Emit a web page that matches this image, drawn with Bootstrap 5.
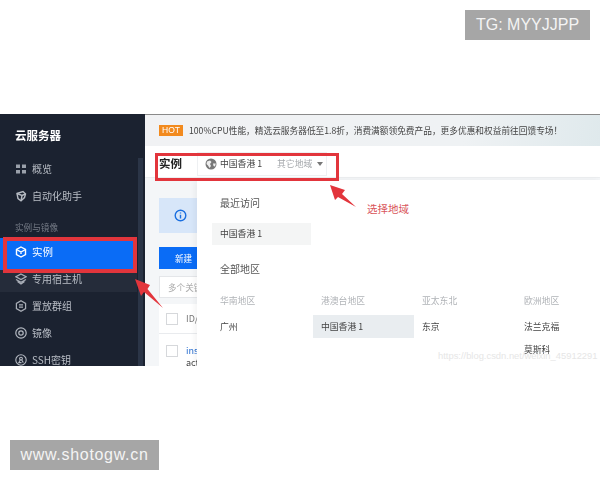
<!DOCTYPE html>
<html lang="zh-CN">
<head>
<meta charset="utf-8">
<title>云服务器 实例</title>
<link rel="stylesheet" href="https://cdn.jsdelivr.net/npm/bootstrap@5.3.0/dist/css/bootstrap.min.css">
<style>
html,body{width:600px;height:480px;overflow:hidden;background:#fff}
body{font-family:"Noto Sans CJK SC","Liberation Sans",sans-serif;position:relative}
.shot{margin-top:114px;height:252px;overflow:hidden;position:relative;filter:blur(.35px)}
.side{width:145px;background:#1b2230;color:#c6cad1;position:relative;flex:none}
.side-title{height:41px;padding-left:15px;font-size:11.5px;font-weight:700;color:#fff;line-height:42px}
.side-row{height:27px;padding-left:15px;font-size:10px;gap:5px;color:#b9bec6;width:136px}
.side-row svg{width:12px;height:12px;flex:none}
.side-label{height:22px;margin-top:7px;padding-left:15px;font-size:8.6px;color:#767c87;line-height:22px}
.side-on{background:#0a6cf6;color:#fff;box-shadow:0 5px 0 #0a6cf6;position:relative;z-index:1;width:135px;font-size:10.5px}
.side-hov{background:#252c3a;width:137px}
.side-bar{position:absolute;right:2px;top:44px;bottom:0;width:5px;background:#2b3547}
.main{background:#f4f6f8;border-top:1px solid #8a8a8a;min-width:0}
.promo{height:31px;padding-left:14px;gap:6px;font-size:8.7px;color:#444;white-space:nowrap;background:linear-gradient(100deg,#f1f2f4 0,#eff2f4 70%,#dfe9ec 100%)}
.hot{background:#f28a1e;color:#fff;font-size:8.5px;font-family:"Liberation Sans",sans-serif;padding:0 3px;line-height:11px}
.head{height:32px;background:#fff;padding:4px 0 0 14px;border-bottom:1px solid #eceef0}
.head-title{font-size:11.5px;font-weight:700;color:#222;width:38px}
.region{width:130px;height:24px;border:1px solid #eef0f2;font-size:8.8px;color:#444;padding-left:7px}
.region svg{width:12px;height:12px;margin-right:3px;flex:none}
.region-more{color:#a5a8ac;margin-left:15px;margin-right:5px}
.caret-down{width:0;height:0;border:3px solid transparent;border-top:4px solid #777;border-bottom:0}
.work{padding:20px 0 0 14px;width:260px}
.notice{height:35px;background:#d7e6f9;padding-left:15px}
.notice svg{width:13px;height:13px}
.make{margin-top:14px;width:70px;height:22px;background:#0a6cf6;color:#fff;font-size:8.6px;padding-left:16px}
.find{margin-top:7px;height:22px;background:#fff;border:1px solid #e4e6e9;font-size:8.6px;color:#aaa;padding-left:8px}
.tbl{margin-top:6px;background:#fff;font-size:9px}
.tbl-row{height:30px;gap:8px;padding-left:7px;border-bottom:1px solid #e9ebee;color:#777}
.tbl-box{width:12px;height:12px;border:1px solid #d6d8db;background:#fff;flex:none}
.tbl-two{height:40px;padding-top:11px;align-items:flex-start}
.tbl-two a{color:#2a6fd0;text-decoration:none;display:block;line-height:12px}
.tbl-two span{color:#444;display:block;line-height:12px}
.drop{position:absolute;left:52px;top:65px;right:0;bottom:0;background:#fff;box-shadow:-2px 0 6px rgba(0,0,0,.05);z-index:2}
.drop-h{font-size:10px;color:#555;padding-left:23px;line-height:14px}
.drop-all{margin-top:17px}
.chip{width:99px;height:22px;margin:13px 0 0 15px;background:#f4f5f5;padding-left:8px;font-size:8.8px;color:#444}
.regions{display:grid;grid-template-columns:101px 101px 102px 80px;margin:13px 0 0 15px;font-size:8.8px;color:#444}
.regions>div{height:23px;padding-left:8px}
.regions .cap{color:#b0b3b7;height:26px;padding-bottom:2px}
.regions .sel{background:#e9edf0}
.over{position:absolute;left:0;top:0;pointer-events:none;z-index:5}
.box-side{position:absolute;left:3px;top:237px;width:134px;height:36px;border:4px solid #e2353c;z-index:4}
.box-head{position:absolute;left:155px;top:153px;width:184px;height:28px;border:3px solid #e2353c;z-index:4}
.tip-red{position:absolute;left:367px;top:201px;font-size:10.5px;color:#d9555a;z-index:4;line-height:16px}
.faint{position:absolute;left:438px;top:350px;font-family:"Liberation Sans",sans-serif;font-size:9.4px;color:#e6e6e6;z-index:4;white-space:nowrap;line-height:12px}
.wm{position:absolute;background:#a6a6a6;color:#f4f4f4;height:30px;font-family:"Liberation Sans",sans-serif;font-size:16px;line-height:30px;text-align:center;z-index:6;white-space:nowrap}
.wm-top{left:465px;top:10px;width:125px}
.wm-bot{left:10px;top:440px;width:149px;letter-spacing:.7px}
</style>
</head>
<body>
<div class="shot d-flex">
  <aside class="side">
    <div class="side-title">云服务器</div>
    <div class="side-row d-flex align-items-center">
      <svg viewBox="0 0 12 12" fill="#9aa0aa"><rect x="1" y="1.5" width="4" height="3.5"/><rect x="7" y="1.5" width="4" height="3.500"/><rect x="1" y="7" width="4" height="3.5"/><rect x="7" y="7" width="4" height="3.5"/></svg>概览</div>
    <div class="side-row d-flex align-items-center">
      <svg viewBox="0 0 12 12" fill="none" stroke="#b5bac2" stroke-width="1.4"><path d="M2 3.5 8 1.5 10.5 4 9.5 7.5 6 10.8 3 8.5Z"/><path d="M2 3.5 7 5.5 10.5 4M7 5.500 6 10.8"/></svg>自动化助手</div>
    <div class="side-label">实例与镜像</div>
    <div class="side-row side-on d-flex align-items-center">
      <svg viewBox="0 0 12 12" fill="none" stroke="#fff" stroke-width="1.4"><path d="M6 1 10.5 3.5V8.5L6 11 1.5 8.5V3.5Z"/><path d="M1.5 3.5 6 6 10.5 3.5M6 6V8"/></svg>实例</div>
    <div class="side-row side-hov d-flex align-items-center">
      <svg viewBox="0 0 12 12" fill="none" stroke="#a9aeb7" stroke-width="1.3"><path d="M6 1 11 3.8 6 6.6 1 3.8Z"/><path d="M1 6.5 6 9.3 11 6.5M2.5 8.5 6 11 9.5 8.5"/></svg>专用宿主机</div>
    <div class="side-row d-flex align-items-center">
      <svg viewBox="0 0 12 12" fill="none" stroke="#a9aeb7" stroke-width="1.2"><path d="M6 .8 10.6 3.4V8.6L6 11.2 1.4 8.6V3.4Z"/><path d="M4 4.8H8M4 7.2H8"/></svg>置放群组</div>
    <div class="side-row d-flex align-items-center">
      <svg viewBox="0 0 12 12" fill="none" stroke="#b5bac2" stroke-width="1.2"><circle cx="6" cy="6" r="5.2"/><circle cx="6" cy="6" r="2.2"/></svg>镜像</div>
    <div class="side-row d-flex align-items-center">
      <svg viewBox="0 0 12 12" fill="none" stroke="#b5bac2" stroke-width="1.1"><circle cx="6" cy="6" r="5.2"/><circle cx="6" cy="4.6" r="1.4"/><path d="M5.4 5.8 3.8 8.6H6.5M6.6 5.8 8.3 8.6"/></svg>SSH密钥</div>
    <div class="side-bar"></div>
  </aside>
  <main class="main flex-grow-1 position-relative">
    <div class="promo d-flex align-items-center"><span class="hot">HOT</span><span>100%CPU性能，精选云服务器低至1.8折，消费满额领免费产品，更多优惠和权益前往回馈专场！</span></div>
    <div class="head d-flex align-items-center">
      <div class="head-title">实例</div>
      <div class="region d-flex align-items-center">
        <svg viewBox="0 0 12 12"><circle cx="6" cy="6" r="5.5" fill="#777"/><path d="M2 3.5 5 2.5 6.5 4 5 6 6 8 4.5 10 3 7.5 1.5 6ZM8 5.5 10.8 5.5 10 8.5 8.5 8Z" fill="#eee"/></svg>
        <span>中国香港 1</span><span class="region-more">其它地域</span><span class="caret-down"></span>
      </div>
    </div>
    <div class="work">
      <div class="notice d-flex align-items-center"><svg viewBox="0 0 13 13" fill="none"><circle cx="6.5" cy="6.5" r="5.3" stroke="#1a6fe0" stroke-width="1.4"/><path d="M6.5 3.4V4.6M6.5 5.8V9.6" stroke="#1a6fe0" stroke-width="1.4"/></svg></div>
      <div class="make d-flex align-items-center">新建</div>
      <div class="find d-flex align-items-center">多个关键字用竖线分隔</div>
      <div class="tbl">
        <div class="tbl-row d-flex align-items-center"><span class="tbl-box"></span>ID/名称</div>
        <div class="tbl-row tbl-two d-flex"><span class="tbl-box"></span><div><a href="#">ins-1</a><span>act</span></div></div>
      </div>
    </div>
    <div class="drop">
      <div class="drop-h pt-3">最近访问</div>
      <div class="chip d-flex align-items-center">中国香港 1</div>
      <div class="drop-h drop-all">全部地区</div>
      <div class="regions">
        <div class="cap d-flex align-items-center">华南地区</div>
        <div class="cap d-flex align-items-center">港澳台地区</div>
        <div class="cap d-flex align-items-center">亚太东北</div>
        <div class="cap d-flex align-items-center">欧洲地区</div>
        <div class="d-flex align-items-center">广州</div>
        <div class="sel d-flex align-items-center">中国香港 1</div>
        <div class="d-flex align-items-center">东京</div>
        <div class="d-flex align-items-center">法兰克福</div>
        <div></div><div></div><div></div>
        <div class="d-flex align-items-center">莫斯科</div>
      </div>
    </div>
  </main>
</div>
<div class="box-side"></div>
<div class="box-head"></div>
<svg class="over" width="600" height="480" viewBox="0 0 600 480">
  <path d="M135 279 150 285 147.500 289 163 308 144 292 141 296Z" fill="#e2353c"/>
  <path d="M330 185 345 190 342 194 356 207 338 197 335 200Z" fill="#e2353c"/>
</svg>
<div class="tip-red">选择地域</div>
<div class="faint">https://blog.csdn.net/weixin_45912291</div>
<div class="wm wm-top">TG: MYYJJPP</div>
<div class="wm wm-bot">www.shotogw.cn</div>
<script src="https://cdn.jsdelivr.net/npm/bootstrap@5.3.0/dist/js/bootstrap.bundle.min.js"></script>
</body>
</html>
